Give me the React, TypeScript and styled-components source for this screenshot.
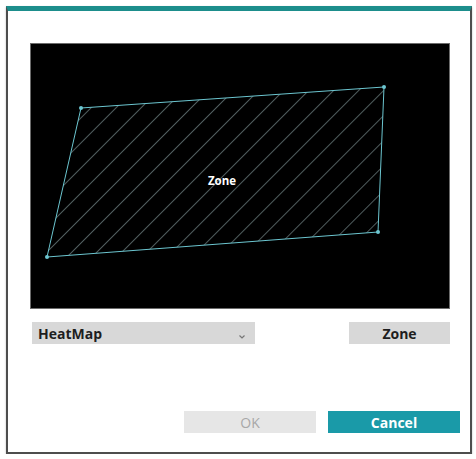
import styled, { createGlobalStyle } from 'styled-components';

const GlobalStyle = createGlobalStyle`
  html, body {
    margin: 0;
    padding: 0;
    background: #ffffff;
  }
  body {
    font-family: "Open Sans", "Noto Sans", "Liberation Sans", sans-serif;
  }
`;

const Dialog = styled.div`
  box-sizing: border-box;
  width: 466px;
  height: 448px;
  margin: 6px 0 0 6px;
  display: flex;
  flex-direction: column;
  padding: 32px 10px 0 22px;
  background: #ffffff;
  border: 2px solid #4d4d4d;
  border-top: 5px solid #1d8e8c;
  box-shadow: 0 1px 2px rgba(0, 0, 0, 0.25);
`;

const Canvas = styled.div`
  box-sizing: border-box;
  width: 420px;
  height: 266px;
  background: #000000;
  border: 1px solid #6b6b6b;

  svg {
    display: block;
  }
`;

const Controls = styled.div`
  width: 420px;
  margin-top: 13px;
  padding-left: 2px;
  box-sizing: border-box;
  display: flex;
  justify-content: space-between;
  align-items: center;
`;

const Select = styled.div`
  width: 223px;
  height: 22px;
  box-sizing: border-box;
  padding: 0 10px 0 6px;
  background: #d8d8d8;
  display: flex;
  align-items: center;
  justify-content: space-between;
  font-size: 14px;
  font-weight: 700;
  color: #1e1e1e;
`;

const Caret = styled.svg`
  margin-top: 8px;
`;

interface ButtonProps {
  $variant?: 'primary' | 'disabled' | 'plain';
}

const Button = styled.div<ButtonProps>`
  height: 22px;
  box-sizing: border-box;
  display: flex;
  align-items: center;
  justify-content: center;
  font-size: 14px;
  background: ${p =>
    p.$variant === 'primary' ? '#1a9aa8' : p.$variant === 'disabled' ? '#e6e6e6' : '#d8d8d8'};
  color: ${p =>
    p.$variant === 'primary' ? '#ffffff' : p.$variant === 'disabled' ? '#a8a8a8' : '#1e1e1e'};
  font-weight: ${p => (p.$variant === 'disabled' ? 400 : 700)};
`;

const ZoneButton = styled(Button)`
  width: 101px;
`;

const Footer = styled.div`
  margin-top: 67px;
  display: flex;
  justify-content: flex-end;
  gap: 12px;
`;

const FooterButton = styled(Button)`
  width: 132px;
`;

const points: [number, number][] = [
  [51, 65],
  [354, 44],
  [348, 189],
  [17, 214],
];

const ZoneCanvas = () => {
  const poly = points.map(p => p.join(',')).join(' ');
  return (
    <svg width="418" height="264" viewBox="1 1 418 264">
      <defs>
        <pattern
          id="hatch"
          patternUnits="userSpaceOnUse"
          width="17.7"
          height="17.7"
          patternTransform="rotate(45)"
        >
          <line x1="0" y1="0" x2="0" y2="17.7" stroke="#8fa6a8" strokeWidth="1.1" />
        </pattern>
      </defs>
      <polygon points={poly} fill="url(#hatch)" stroke="#6cc6d0" strokeWidth="1" />
      {points.map(([x, y], i) => (
        <circle key={i} cx={x} cy={y} r="2" fill="#6cc6d0" />
      ))}
      <text
        x="192"
        y="142"
        textAnchor="middle"
        fill="#ffffff"
        fontSize="11.5"
        fontWeight="700"
        fontFamily="Open Sans, sans-serif"
      >
        Zone
      </text>
    </svg>
  );
};

const App = () => {
  return (
    <>
      <GlobalStyle />
      <Dialog>
        <Canvas>
          <ZoneCanvas />
        </Canvas>
        <Controls>
          <Select>
            HeatMap
            <Caret width="6" height="4" viewBox="0 0 6 4">
              <path d="M0.5 0.5 L3 3 L5.5 0.5" fill="none" stroke="#777" strokeWidth="1.2" />
            </Caret>
          </Select>
          <ZoneButton>Zone</ZoneButton>
        </Controls>
        <Footer>
          <FooterButton $variant="disabled">OK</FooterButton>
          <FooterButton $variant="primary">Cancel</FooterButton>
        </Footer>
      </Dialog>
    </>
  );
};

export default App;
